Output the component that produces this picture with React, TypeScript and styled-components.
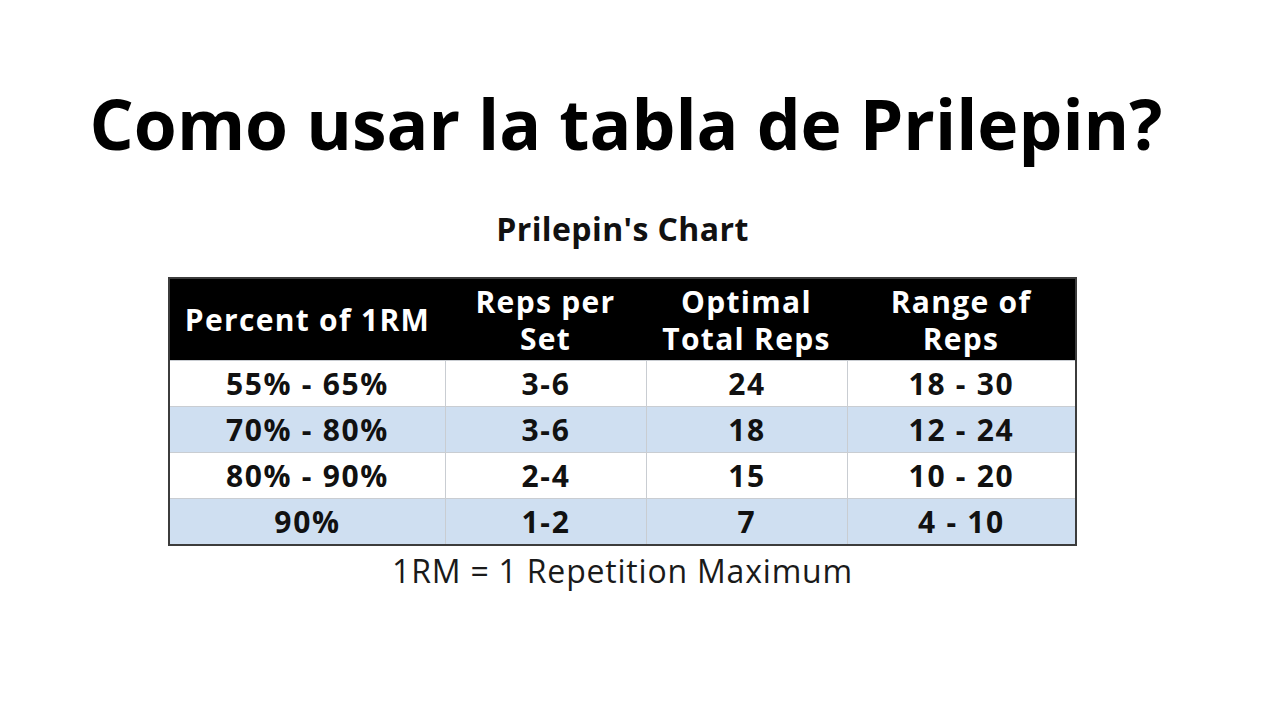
import React from "react";
import styled, { createGlobalStyle } from "styled-components";

const Global = createGlobalStyle`
  html, body { margin: 0; padding: 0; background: #ffffff; }
  body { font-family: "Open Sans", "Liberation Sans", sans-serif; color: #111; }
`;

const Page = styled.div`
  width: 1280px;
  height: 720px;
  box-sizing: border-box;
  display: flex;
  flex-direction: column;
  align-items: center;
  padding: 88px 35px 0 0;
`;

const Title = styled.h1`
  margin: 0 0 0 7px;
  font-family: "Open Sans", sans-serif;
  font-weight: 700;
  font-size: 69.5px;
  line-height: 70px;
  color: #000;
  white-space: nowrap;
`;

const ChartTitle = styled.h2`
  margin: 55px 0 0;
  font-family: "Open Sans", sans-serif;
  font-weight: 700;
  font-size: 32px;
  line-height: 32px;
  color: #111;
  letter-spacing: 0.4px;
`;

const Grid = styled.div`
  margin-top: 32px;
  display: grid;
  grid-template-columns: 275px 201px 201px 228px;
  border: 2px solid #3c3c3c;
  background: #fff;
`;

const HeadCell = styled.div`
  height: 81px;
  background: #000;
  color: #fff;
  display: flex;
  align-items: center;
  justify-content: center;
  text-align: center;
  font-weight: 700;
  font-size: 30px;
  line-height: 37px;
  letter-spacing: 1.3px;
`;

const Cell = styled.div<{ $alt: boolean; $first: boolean }>`
  height: 45px;
  border-top: 1px solid #c9cdd2;
  border-left: ${(p) => (p.$first ? "none" : "1px solid #c9cdd2")};
  background: ${(p) => (p.$alt ? "#cfdff1" : "#ffffff")};
  display: flex;
  align-items: center;
  justify-content: center;
  font-weight: 700;
  font-size: 30px;
  color: #111;
  letter-spacing: 1.7px;
`;

const Footnote = styled.p`
  margin: 9px 0 0;
  font-family: "Open Sans", sans-serif;
  font-weight: 400;
  font-size: 32px;
  line-height: 32px;
  color: #1a1a1a;
  letter-spacing: 0.8px;
`;

const headers: React.ReactNode[] = [
  "Percent of 1RM",
  <>Reps per<br />Set</>,
  <>Optimal<br />Total Reps</>,
  <>Range of<br />Reps</>,
];

const rows = [
  ["55% - 65%", "3-6", "24", "18 - 30"],
  ["70% - 80%", "3-6", "18", "12 - 24"],
  ["80% - 90%", "2-4", "15", "10 - 20"],
  ["90%", "1-2", "7", "4 - 10"],
];

export default function App() {
  return (
    <>
      <Global />
      <Page>
        <Title>Como usar la tabla de Prilepin?</Title>
        <ChartTitle>Prilepin's Chart</ChartTitle>
        <Grid>
          {headers.map((h, i) => (
            <HeadCell key={i}>{h}</HeadCell>
          ))}
          {rows.map((r, ri) =>
            r.map((c, ci) => (
              <Cell key={`${ri}-${ci}`} $alt={ri % 2 === 1} $first={ci === 0}>
                {c}
              </Cell>
            ))
          )}
        </Grid>
        <Footnote>1RM = 1 Repetition Maximum</Footnote>
      </Page>
    </>
  );
}
